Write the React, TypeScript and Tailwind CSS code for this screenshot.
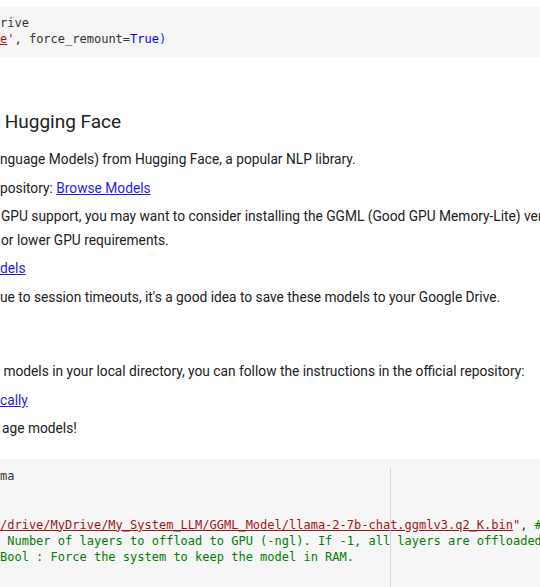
const mono = "font-['DejaVu_Sans_Mono',monospace] text-[12px] leading-[16.25px] whitespace-pre text-[#333]";
const md = "font-['Roboto',sans-serif] text-[13.75px] leading-[24px] text-[#212121] whitespace-pre";
const link = "text-[#1f1fe6] underline";

export default function App() {
  return (
    <div className="relative h-[587px] w-[540px] overflow-hidden bg-white">
      {/* drive mount cell */}
      <div className={`mt-[7px] h-[50px] bg-[#f6f6f6] pt-[8px] ${mono}`}>
        <div>rive</div>
        <div>
          <span className="text-[#a31515] underline">e</span>
          <span className="text-[#a31515]">'</span>, force_remount=
          <span className="text-[#0000ff]">True</span>
          <span className="text-[#0431fa]">)</span>
        </div>
      </div>

      {/* markdown cell */}
      <div className={md}>
        <h2 className="mt-[51px] text-[19px] leading-[28px] font-normal text-[#212121]"> Hugging Face</h2>
        <p className="mt-[11px]">nguage Models) from Hugging Face, a popular NLP library.</p>
        <p className="mt-[5px]">
          pository: <a className={link}>Browse Models</a>
        </p>
        <p className="mt-[4px] pl-[1px]">
          GPU support, you may want to consider installing the GGML (Good GPU Memory-Lite) version
          {"\n"}or lower GPU requirements.
        </p>
        <p className="mt-[4px]">
          <a className={link}>dels</a>
        </p>
        <p className="mt-[5px]">ue to session timeouts, it's a good idea to save these models to your Google Drive.</p>
        <p className="mt-[50px]"> models in your local directory, you can follow the instructions in the official repository:</p>
        <p className="mt-[5px]">
          <a className={link}>cally</a>
        </p>
        <p className="mt-[4px] pl-[2px]">age models!</p>
      </div>

      {/* llama cell */}
      <div className={`relative mt-[19px] h-[200px] bg-[#f6f6f6] pt-[9px] ${mono}`}>
        <div className="absolute bottom-0 left-[390px] top-[9px] w-px bg-[#d6d6d6]" />
        <div>ma</div>
        <div> </div>
        <div> </div>
        <div>
          <span className="text-[#a31515] underline">/drive/MyDrive/My_System_LLM/GGML_Model/llama-2-7b-chat.ggmlv3.q2_K.bin</span>
          <span className="text-[#a31515]">"</span>,{" "}
          <span className="text-[#008000]"># Download the model file first</span>
        </div>
        <div className="text-[#008000]"> Number of layers to offload to GPU (-ngl). If -1, all layers are offloaded.</div>
        <div className="text-[#008000]">Bool : Force the system to keep the model in RAM.</div>
      </div>
    </div>
  );
}
